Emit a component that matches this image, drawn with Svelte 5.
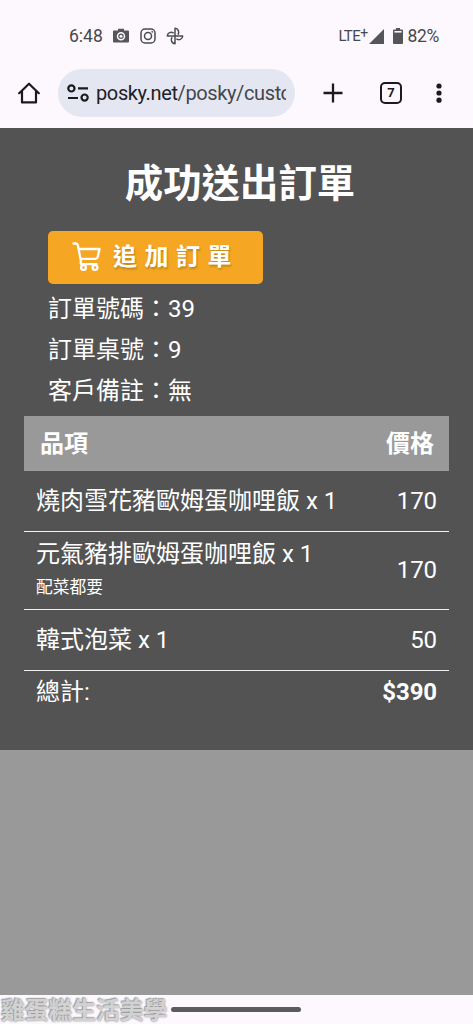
<script lang="ts">
  const info = [
    { label: '訂單號碼', value: '39' },
    { label: '訂單桌號', value: '9' },
    { label: '客戶備註', value: '無' },
  ];

  const items = [
    { name: '燒肉雪花豬歐姆蛋咖哩飯', qty: 1, price: 170, note: '' },
    { name: '元氣豬排歐姆蛋咖哩飯', qty: 1, price: 170, note: '配菜都要' },
    { name: '韓式泡菜', qty: 1, price: 50, note: '' },
  ];

  const total = items.reduce((sum, item) => sum + item.price * item.qty, 0);
</script>

<div class="phone">
  <div class="status-bar">
    <div class="status-left">
      <span class="clock">6:48</span>
      <svg class="camera" width="16" height="16" viewBox="0 0 16 16">
        <path fill="#55565a" fill-rule="evenodd" d="M5 .8h6v1.7h4a1 1 0 0 1 1 1v10a1 1 0 0 1-1 1H1a1 1 0 0 1-1-1v-10a1 1 0 0 1 1-1h4z" />
        <circle cx="8" cy="8.2" r="3.5" fill="#55565a" stroke="#fdf8fd" stroke-width="1.5" />
        <circle cx="8" cy="8.2" r="1.5" fill="#fdf8fd" />
      </svg>
      <svg class="insta" width="16" height="16" viewBox="0 0 16 16" fill="none" stroke="#4b4c50" stroke-width="1.5">
        <rect x="1" y="1" width="14" height="14" rx="4" />
        <circle cx="8" cy="8" r="3.5" />
        <circle cx="12.2" cy="3.8" r="0.9" fill="#4b4c50" stroke="none" />
      </svg>
      <svg class="pinwheel" width="18" height="18" viewBox="0 0 18 18" fill="none" stroke="#4b4c50" stroke-width="1.5" stroke-linejoin="round">
        <path d="M9 9V1.3a3.9 3.9 0 0 1 2.8 6.4" />
        <path d="M9 9h7.7a3.9 3.9 0 0 1-6.4 2.8" />
        <path d="M9 9v7.7a3.9 3.9 0 0 1-2.8-6.4" />
        <path d="M9 9H1.3a3.9 3.9 0 0 1 6.4-2.8" />
      </svg>
    </div>
    <div class="status-right">
      <span class="lte">LTE<sup>+</sup></span>
      <svg class="signal" width="15" height="15" viewBox="0 0 15 15"><path fill="#55565a" d="M15 0v15H0z" /></svg>
      <svg class="battery" width="10" height="16" viewBox="0 0 10 16">
        <path fill="#55565a" d="M3 0h4v1.5h2a1 1 0 0 1 1 1V15a1 1 0 0 1-1 1H1a1 1 0 0 1-1-1V2.5a1 1 0 0 1 1-1h2z" />
        <path fill="#fdf8fd" d="M1.4 3h7.2v1.6H1.4z" />
      </svg>
      <span class="percent">82%</span>
    </div>
  </div>

  <div class="toolbar">
    <svg class="home" width="22" height="22" viewBox="0 0 22 22" fill="none" stroke="#1b1b1f" stroke-width="2.2" stroke-linejoin="round" stroke-linecap="round">
      <path d="M1.2 11.2 11 1.7l9.8 9.5M4 9.2v11.2h14V9.2" />
    </svg>
    <div class="address">
      <svg width="22" height="18" viewBox="0 0 22 18" fill="none" stroke="#1b1b1f" stroke-width="2.2">
        <circle cx="4.4" cy="4.4" r="3.1" />
        <path d="M11 4.4h10M1 14h10" />
        <circle cx="17.6" cy="13.6" r="3.1" />
      </svg>
      <span class="url">posky.net<span class="path">/posky/custo</span></span>
    </div>
    <svg class="plus" width="20" height="20" viewBox="0 0 20 20" stroke="#1b1b1f" stroke-width="2.3">
      <path d="M10 .5v19M.5 10h19" />
    </svg>
    <span class="tabs">7</span>
    <svg class="dots" width="6" height="20" viewBox="0 0 6 20" fill="#1b1b1f">
      <circle cx="3" cy="3" r="2.6" />
      <circle cx="3" cy="10" r="2.6" />
      <circle cx="3" cy="17.2" r="2.6" />
    </svg>
  </div>

  <main>
    <h1>成功送出訂單</h1>

    <button class="add-order">
      <svg width="30" height="30" viewBox="0 0 30 30" fill="none" stroke="#fff" stroke-width="2.3" stroke-linecap="round" stroke-linejoin="round">
        <path d="M1.5 1.5h2.2q1.8.2 2.2 1.9L9 19.5M6.7 7h20.8l-1.8 8q-.4 1.8-2.2 1.8H8.8M9 19.5q-.9 2.7 1 2.7h14.5" />
        <circle cx="11.5" cy="25.5" r="2.4" />
        <circle cx="23" cy="25.5" r="2.4" />
      </svg>
      <span>追加訂單</span>
    </button>

    <div class="info">
      {#each info as row}
        <div>{row.label}：{row.value}</div>
      {/each}
    </div>

    <div class="order">
      <div class="order-head">
        <span>品項</span>
        <span>價格</span>
      </div>
      {#each items as item}
        <div class="order-row" class:with-note={item.note}>
          <div>
            <div class="name">{item.name} x {item.qty}</div>
            {#if item.note}
              <div class="note">{item.note}</div>
            {/if}
          </div>
          <span class="price">{item.price}</span>
        </div>
      {/each}
      <div class="total">
        <span>總計:</span>
        <strong>${total}</strong>
      </div>
    </div>
  </main>

  <div class="rest"></div>

  <div class="nav-bar">
    <span class="watermark">雞蛋糕生活美學</span>
    <span class="handle"></span>
  </div>
</div>

<style>
  :global(body) {
    margin: 0;
    background: #fdf8fd;
  }

  .phone {
    width: 473px;
    height: 1024px;
    overflow: hidden;
    display: flex;
    flex-direction: column;
    background: #fdf8fd;
    font-family: Roboto, "Noto Sans CJK TC", sans-serif;
  }

  .status-bar {
    box-sizing: border-box;
    height: 60px;
    padding: 12px 34px 0 69px;
    display: flex;
    align-items: center;
    justify-content: space-between;
    color: #47484c;
    font-size: 17.5px;
  }

  .status-left,
  .status-right {
    display: flex;
    align-items: center;
  }

  .clock {
    width: 44px;
  }

  .insta {
    margin-left: 11px;
  }

  .pinwheel {
    margin-left: 10px;
  }

  .lte {
    width: 31px;
    font-size: 15px;
    letter-spacing: -0.6px;
    white-space: nowrap;
  }

  .lte sup {
    font-size: 14px;
    line-height: 0;
    vertical-align: 3px;
  }

  .battery {
    margin: 0 4px 0 9px;
  }

  .percent {
    letter-spacing: -0.3px;
  }

  .toolbar {
    box-sizing: border-box;
    height: 68px;
    padding: 0 31px 2px 18px;
    display: flex;
    align-items: center;
  }

  .address {
    box-sizing: border-box;
    width: 237px;
    height: 48px;
    margin-left: 18px;
    padding: 0 9px;
    border-radius: 24px;
    background: #e4e6f1;
    display: flex;
    align-items: center;
  }

  .address svg {
    flex-shrink: 0;
  }

  .url {
    margin-left: 7px;
    overflow: hidden;
    white-space: nowrap;
    color: #1f2024;
    font-size: 20px;
    line-height: 28px;
    letter-spacing: -0.38px;
  }

  .path {
    color: #44464f;
  }

  .plus {
    margin-left: 28px;
  }

  .tabs {
    box-sizing: border-box;
    width: 22px;
    height: 22px;
    margin-left: 37px;
    border: 2px solid #1b1b1f;
    border-radius: 5px;
    color: #1b1b1f;
    font-size: 13px;
    font-weight: 700;
    line-height: 18px;
    text-align: center;
  }

  .dots {
    margin-left: 34px;
  }

  main {
    box-sizing: border-box;
    height: 622px;
    padding: 28px 24px 0;
    background: #535353;
    color: #fff;
    font-size: 24px;
  }

  h1 {
    margin: 0 0 19px 7px;
    font-size: 38.4px;
    line-height: 56px;
    text-align: center;
  }

  .add-order {
    box-sizing: border-box;
    width: 215px;
    height: 53px;
    margin-left: 24px;
    padding: 0 0 0 24px;
    border: none;
    border-radius: 5px;
    background: #f5a623;
    color: #fff;
    display: flex;
    align-items: center;
    font-family: inherit;
    font-size: 24px;
    font-weight: 700;
    letter-spacing: 7.5px;
    text-shadow: 1px 2px 2px rgba(0, 0, 0, 0.2);
  }

  .add-order svg {
    margin-top: -2px;
  }

  .add-order span {
    margin-left: 11px;
    line-height: 48px;
    padding-bottom: 2px;
  }

  .info {
    margin: 5px 0 4px 24px;
    line-height: 41px;
  }

  .order-head {
    box-sizing: border-box;
    height: 55px;
    padding: 0 15px 4px 16px;
    background: #999;
    display: flex;
    align-items: center;
    justify-content: space-between;
    font-weight: 700;
  }

  .order-row {
    box-sizing: border-box;
    height: 61px;
    padding: 0 12px;
    border-bottom: 1px solid #f2f2f2;
    display: flex;
    align-items: center;
    justify-content: space-between;
  }

  .with-note {
    height: 78px;
    padding-bottom: 2px;
  }

  .name {
    line-height: 36px;
  }

  .price,
  .total strong {
    letter-spacing: -0.1px;
  }

  .note {
    font-size: 16.8px;
    line-height: 31px;
  }

  .total {
    padding: 0 12px;
    display: flex;
    justify-content: space-between;
    line-height: 42px;
  }

  .rest {
    height: 245px;
    background: #999;
  }

  .nav-bar {
    flex: 1;
    display: flex;
    align-items: center;
  }

  .watermark {
    box-sizing: border-box;
    width: 171px;
    padding: 3px 0 0 1px;
    color: #d2d2d2;
    font-size: 23.8px;
    font-weight: 700;
    line-height: 26px;
    white-space: nowrap;
    text-shadow: 0 0 2px #888, -1px -1px 1px #aaa;
  }

  .handle {
    width: 130px;
    height: 5px;
    border-radius: 3px;
    background: #5c5b5e;
  }
</style>
